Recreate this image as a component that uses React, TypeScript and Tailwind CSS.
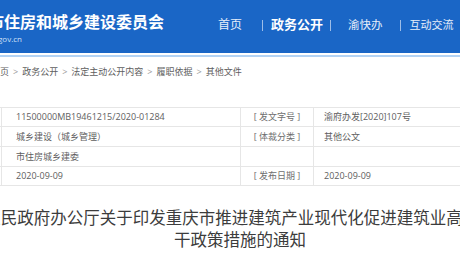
import React from 'react';

const font = "font-['Open_Sans','Noto_Sans_CJK_SC',sans-serif]";

const crumbs = ['首页', '政务公开', '法定主动公开内容', '履职依据', '其他文件'];

interface Row {
    label1: string;
    value1: string;
    label2: string;
    value2: string;
}

const rows: Row[] = [
    { label1: '[ 索引号 ]', value1: '11500000MB19461215/2020-01284', label2: '[ 发文字号 ]', value2: '渝府办发[2020]107号' },
    { label1: '[ 主题分类 ]', value1: '城乡建设（城乡管理）', label2: '[ 体裁分类 ]', value2: '其他公文' },
    { label1: '[ 发布机构 ]', value1: '市住房城乡建委', label2: '', value2: '' },
    { label1: '[ 成文日期 ]', value1: '2020-09-09', label2: '[ 发布日期 ]', value2: '2020-09-09' },
];

const App: React.FC = () => {
    return (
        <div className={`w-[460px] h-[260px] overflow-hidden bg-white ${font}`}>
            {/* header */}
            <header className="h-[53px] bg-[#1a66c6] flex">
                <div className="ml-[-44px] w-[208px] shrink-0 pt-[12px]">
                    <div className="text-[16px] leading-[20px] font-bold text-white whitespace-nowrap">
                        重庆市住房和城乡建设委员会
                    </div>
                    <div className="w-[66px] mt-[2px] text-right text-[8px] leading-[10px] text-[#cfe0f6] whitespace-nowrap">
                        zfcxjw.cq.gov.cn
                    </div>
                </div>
                <nav className="h-[50px] flex items-center whitespace-nowrap">
                    <span className="ml-[54px] text-[12px] text-[#e6eefa]">首页</span>
                    <span className="ml-[20px] w-px h-[11px] bg-[#9dbde8]" />
                    <span className="ml-[8px] text-[13px] font-bold text-white">政务公开</span>
                    <span className="ml-[7px] w-px h-[11px] bg-[#9dbde8]" />
                    <span className="ml-[17px] text-[11.5px] text-[#e6eefa]">渝快办</span>
                    <span className="ml-[17px] w-px h-[11px] bg-[#9dbde8]" />
                    <span className="ml-[9px] text-[11px] text-[#e6eefa]">互动交流</span>
                </nav>
            </header>
            <div className="mt-[2px] h-[2px] bg-[#b3d3f4]" />

            {/* breadcrumb */}
            <div className="h-[30px] flex items-center ml-[-9px] text-[9px] text-[#5e5e5e] whitespace-nowrap">
                {crumbs.map((c, i) => (
                    <React.Fragment key={c}>
                        {i > 0 && <span className="mx-[4px] text-[#999]">&gt;</span>}
                        <span>{c}</span>
                    </React.Fragment>
                ))}
            </div>

            {/* info table */}
            <div className="mt-[20px] ml-[-72px] w-[624px] grid grid-cols-[73px_239px_73px_239px] grid-rows-[19px_20px_20px_19px] border-t border-l border-[#e6e6e6] text-[9px] text-[#5e5e5e] whitespace-nowrap">
                {rows.map((r, i) => (
                    <React.Fragment key={i}>
                        <div className="border-r border-b border-[#e6e6e6] flex items-center justify-center text-[#6e6e6e]">{r.label1}</div>
                        <div className="border-r border-b border-[#e6e6e6] flex items-center pl-[14px]">{r.value1}</div>
                        <div className="border-r border-b border-[#e6e6e6] flex items-center justify-center text-[#6e6e6e]">{r.label2}</div>
                        <div className="border-r border-b border-[#e6e6e6] flex items-center pl-[10px]">{r.value2}</div>
                    </React.Fragment>
                ))}
            </div>

            {/* title */}
            <h1 className="mt-[21px] ml-[-70px] w-[620px] text-center text-[16.5px] leading-[22px] text-[#3c3c3c] font-normal">
                重庆市人民政府办公厅关于印发重庆市推进建筑产业现代化促进建筑业高质量发展若干政策措施的通知
            </h1>
        </div>
    );
};

export default App;
